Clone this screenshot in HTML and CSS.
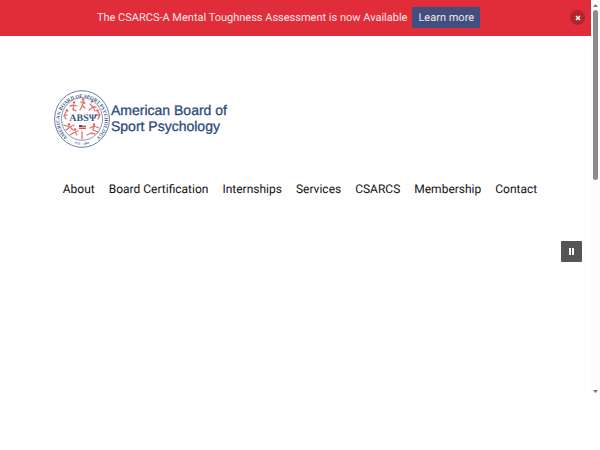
FILE: index.html
```
<!DOCTYPE html>
<html lang="en">
<head>
<meta charset="utf-8">
<title>American Board of Sport Psychology</title>
<link rel="stylesheet" href="styles.css">
</head>
<body>
<div class="frame">
  <div class="page">
    <div class="notice">
      <p class="notice-text">The CSARCS-A Mental Toughness Assessment is now Available</p>
      <a class="notice-button" href="#">Learn more</a>
      <button class="notice-close" type="button" aria-label="Close">
        <svg viewBox="0 0 6 6" width="6" height="6"><path d="M1 1l4 4M5 1L1 5" stroke="#fff" stroke-width="1.5"/></svg>
      </button>
    </div>
    <header class="header">
      <a class="brand" href="#">
        <svg class="seal" viewBox="0 0 56 58" width="56" height="58" aria-hidden="true">
          <defs>
            <path id="ring-top" d="M12.500 46.500A22.500 22.500 0 1 1 43.500 46.500"/>
            <path id="ring-bottom" d="M14 50.500A25.500 25.500 0 0 0 42 50.500"/>
          </defs>
          <g fill="none" stroke="#6a80a6">
            <ellipse cx="28" cy="29" rx="27.400" ry="28.300" stroke-width="1"/>
            <ellipse cx="28" cy="29" rx="20.500" ry="21.300" stroke-width=".8"/>
          </g>
          <text class="ring-text"><textPath href="#ring-top" startOffset="50%" text-anchor="middle">AMERICAN BOARD OF SPORT PSYCHOLOGY</textPath></text>
          <text class="est-text"><textPath href="#ring-bottom" startOffset="50%" text-anchor="middle">EST. · 2000</textPath></text>
          <g fill="none" stroke="#dc736f" stroke-width="1.300" stroke-linecap="round" stroke-linejoin="round">
            <path d="M16 16l4-1 3 1M20 15l-1 5M19 19l3 2"/>
            <path d="M30 11l-2 5-2 4M28 15l3 3M27 12l4 1"/>
            <path d="M36 14l3 3 3 0M39 17l-4 3M39 17l2 4"/>
            <path d="M12 22l-2 4 2 3M10 26l3-1"/>
            <path d="M44 22l2 3-2 4M46 25l-4 0"/>
            <path d="M10 35l6 2 4-2M16 37l-4 3M16 37l3 3"/>
            <path d="M36 38l4-2 5 2M40 36l-1 4 5 2"/>
            <path d="M16 45l5-3 3-1M21 42l2 3M28 42v7M33 45l4-2 4 1"/>
          </g>
          <g fill="#d9605c">
            <circle cx="20" cy="12.500" r="1.200"/><circle cx="29" cy="9.500" r="1.200"/><circle cx="38" cy="11.500" r="1.200"/>
            <circle cx="13" cy="20.500" r="1.200"/><circle cx="43.500" cy="20.500" r="1.200"/><circle cx="15" cy="34.500" r="1.200"/>
            <circle cx="40" cy="34.500" r="1.200"/><circle cx="21" cy="39.500" r="1.200"/>
          </g>
          <text class="seal-text" x="29" y="31" text-anchor="middle">ABSΨ</text>
          <path fill="#efb4b2" d="M25 35h7v4h-7z"/>
          <path fill="#d9504c" d="M25 36h7v1h-7zM25 38h7v1h-7z"/>
          <path fill="#3b5682" d="M25 35h3v2h-3z"/>
        </svg>
        <span class="brand-name">American Board of<br>Sport Psychology</span>
      </a>
      <nav class="nav">
        <a href="#">About</a>
        <a href="#">Board Certification</a>
        <a href="#">Internships</a>
        <a href="#">Services</a>
        <a href="#">CSARCS</a>
        <a href="#">Membership</a>
        <a href="#">Contact</a>
      </nav>
    </header>
    <main class="hero">
      <button class="pause" type="button" aria-label="Pause">
        <svg viewBox="0 0 5 7" width="5" height="7"><path fill="#fff" d="M0 0h2v7H0zM3 0h2v7H3z"/></svg>
      </button>
    </main>
  </div>
  <div class="scrollbar" aria-hidden="true">
    <svg viewBox="0 0 5 3" width="5" height="3"><path fill="#777" d="M0 3L2.500 0 5 3z"/></svg>
    <div class="track"><div class="thumb"></div></div>
    <svg viewBox="0 0 5 3" width="5" height="3"><path fill="#777" d="M0 0h5L2.500 3z"/></svg>
  </div>
</div>
</body>
</html>
```
FILE: styles.css
```
* {
  box-sizing: border-box;
}

body {
  margin: 0;
  background: #fff;
  font-family: Roboto, "Liberation Sans", sans-serif;
  text-rendering: geometricPrecision;
}

a {
  color: inherit;
  text-decoration: none;
}

button {
  display: flex;
  align-items: center;
  justify-content: center;
  padding: 0;
  border: 0;
}

.frame {
  display: grid;
  grid-template-columns: 1fr 9px;
}

.notice {
  position: relative;
  display: flex;
  align-items: center;
  justify-content: center;
  gap: 5px;
  padding: 7px 38px 8px 24px;
  background: #e12d39;
  color: #fbe4e6;
  font-size: 11px;
  line-height: 21px;
}

.notice-text {
  margin: 0;
}

.notice-button {
  padding: 0 6px;
  border-radius: 1px;
  background: #3e4f80;
}

.notice-close {
  position: absolute;
  top: 10px;
  right: 6px;
  width: 15px;
  height: 15px;
  border-radius: 50%;
  background: #b4242e;
}

.header {
  padding-top: 54px;
}

.brand {
  display: flex;
  align-items: center;
  gap: 1px;
  padding: 0 54px;
}

.brand-name {
  padding-bottom: 3px;
  color: #2b4a80;
  font: 14px/16px "Liberation Sans", sans-serif;
  -webkit-text-stroke: 0.3px #2b4a80;
}

.ring-text,
.est-text,
.seal-text {
  fill: #3b5682;
  font-family: "Liberation Serif", serif;
  font-weight: bold;
}

.ring-text {
  font-size: 5px;
}

.est-text {
  font-size: 3px;
}

.seal-text {
  font-size: 10px;
}

.nav {
  display: flex;
  justify-content: center;
  gap: 14px;
  margin-top: 32px;
  padding-left: 9px;
  color: #111;
  font-size: 12px;
  line-height: 18px;
  white-space: nowrap;
}

.hero {
  display: flex;
  justify-content: flex-end;
  padding: 43px 9px 134px;
}

.pause {
  width: 21px;
  height: 21px;
  border-radius: 1px;
  background: #555;
}

.scrollbar {
  display: flex;
  flex-direction: column;
  align-items: center;
  padding: 4px 0 3px;
  background: #fcfcfc;
}

.track {
  flex: 1;
  width: 5px;
  padding: 3px 0;
}

.thumb {
  height: 45%;
  border-radius: 3px;
  background: #8b8b8b;
}
```
